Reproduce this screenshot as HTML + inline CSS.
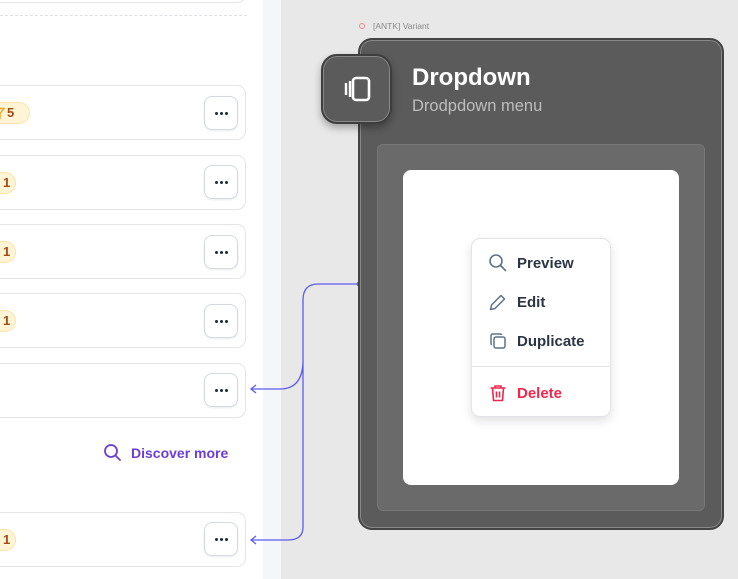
<!DOCTYPE html>
<html><head><style>
*{box-sizing:border-box;margin:0;padding:0}
body{width:738px;height:579px;overflow:hidden;background:#e8e8e8;font-family:"Liberation Sans",sans-serif;position:relative}
.left{position:absolute;left:0;top:0;width:263px;height:579px;background:#fff}
.strip{position:absolute;left:263px;top:0;width:18px;height:579px;background:#f5f6f8}
.card{position:absolute;left:-20px;width:266px;height:55px;border:1px solid #e3e5e9;border-radius:9px;background:#fff}
.btn{position:absolute;left:204px;width:34px;height:34px;border:1px solid #d5dae1;border-radius:8px;background:#fff;box-shadow:0 1px 2px rgba(0,0,0,.08)}
.btn::after{content:"";position:absolute;left:10px;top:15px;width:3px;height:3px;border-radius:50%;background:#1f2937;box-shadow:5px 0 #1f2937,10px 0 #1f2937}
.badge{position:absolute;height:22px;border-radius:11px;background:#fff4d6;border:1px solid #fde4a6;color:#a24c12;font-weight:bold;font-size:13px;line-height:20px}
.frame{position:absolute;left:358px;top:38px;width:366px;height:492px;background:#5b5b5b;border:2px solid #444;border-radius:14px;box-shadow:inset 0 0 0 1px #888}
.icon{position:absolute;left:321px;top:54px;width:71px;height:70px;background:#5b5b5b;border:2px solid #3e3e3e;border-radius:16px;box-shadow:0 4px 8px rgba(0,0,0,.3),inset 0 0 0 1px #888}
.menu{position:absolute;left:471px;top:238px;width:140px;height:179px;background:#fff;border:1px solid #e2e4e8;border-radius:9px;box-shadow:0 4px 10px rgba(0,0,0,.12)}
.mi{position:absolute;left:45px;font-size:15px;font-weight:bold;color:#2b3544}
</style></head><body>
<div class="left"></div>
<div class="strip"></div>
<div class="card" style="top:-52px"></div>
<div style="position:absolute;left:0;top:15px;width:247px;border-top:1px dashed #dcdfe4"></div>

<div class="card" style="top:85px"></div>
<div class="card" style="top:155px"></div>
<div class="card" style="top:224px"></div>
<div class="card" style="top:293px"></div>
<div class="card" style="top:363px"></div>
<div class="card" style="top:512px"></div>

<div class="badge" style="left:-10px;top:102px;width:40px;padding-left:14px"><svg width="12" height="12" viewBox="0 0 12 12" style="position:absolute;left:2px;top:4px"><path d="M1 1.5h10L7 6.5V11L5 10V6.5Z" fill="none" stroke="#f5a524" stroke-width="1.4"/></svg><span style="position:absolute;left:16px">5</span></div>
<div class="badge" style="left:-10px;top:172px;width:26px;padding-left:12px">1</div>
<div class="badge" style="left:-10px;top:241px;width:26px;padding-left:12px">1</div>
<div class="badge" style="left:-10px;top:310px;width:26px;padding-left:12px">1</div>
<div class="badge" style="left:-10px;top:529px;width:26px;padding-left:12px">1</div>

<div class="btn" style="top:96px"></div>
<div class="btn" style="top:165px"></div>
<div class="btn" style="top:235px"></div>
<div class="btn" style="top:304px"></div>
<div class="btn" style="top:373px"></div>
<div class="btn" style="top:522px"></div>

<svg style="position:absolute;left:103px;top:443px" width="20" height="20" viewBox="0 0 20 20"><circle cx="8" cy="8" r="6" fill="none" stroke="#6a3fd8" stroke-width="1.8"/><path d="M12.5 12.5L17 17" stroke="#6a3fd8" stroke-width="1.8" stroke-linecap="round"/></svg>
<div style="position:absolute;left:131px;top:445px;font-size:14px;font-weight:bold;color:#6a3fd8">Discover more</div>

<svg style="position:absolute;left:0;top:0" width="738" height="579">
<path d="M359 284H318Q303 284 303 300V527Q303 540 288 540H251M303 360Q303 389 280 389H251" fill="none" stroke="#5b5cf0" stroke-width="1.3"/>
<path d="M256 385L251 389L256 393M256 536L251 540L256 544" fill="none" stroke="#5b5cf0" stroke-width="1.3"/>
<circle cx="359" cy="284" r="2.5" fill="#5b5cf0"/>
</svg>

<div style="position:absolute;left:359px;top:23px;width:6px;height:6px;border:1.3px solid #e88;border-radius:50%"></div>
<div style="position:absolute;left:373px;top:21px;font-size:8.5px;color:#888">[ANTK] Variant</div>

<div class="frame"></div>
<div style="position:absolute;left:377px;top:144px;width:328px;height:367px;background:#6b6a6b;border:1px solid #777;border-radius:6px"></div>
<div style="position:absolute;left:403px;top:170px;width:276px;height:315px;background:#fff;border-radius:8px"></div>
<div class="icon"><svg width="71" height="70" viewBox="0 0 71 70" style="position:absolute;left:-2px;top:-2px"><rect x="32" y="24" width="16" height="22" rx="3" fill="none" stroke="#fff" stroke-width="2.6"/><path d="M25 29v12M29 27v16" stroke="#fff" stroke-width="2.4"/></svg></div>
<div style="position:absolute;left:412px;top:64px;font-size:24px;font-weight:bold;color:#fff">Dropdown</div>
<div style="position:absolute;left:412px;top:97px;font-size:16.5px;color:#bdbdbd">Drodpdown menu</div>

<div class="menu">
<svg style="position:absolute;left:16px;top:14px" width="20" height="20" viewBox="0 0 20 20"><circle cx="8" cy="8" r="6" fill="none" stroke="#5f7384" stroke-width="1.6"/><path d="M12.5 12.5L17.5 17.5" stroke="#5f7384" stroke-width="1.6" stroke-linecap="round"/></svg>
<div class="mi" style="top:16px">Preview</div>
<svg style="position:absolute;left:16px;top:53px" width="20" height="20" viewBox="0 0 20 20"><path d="M13 3.5l3.5 3.5L7 16.5 2.5 17.5 3.5 13Z" fill="none" stroke="#5f7384" stroke-width="1.5" stroke-linejoin="round"/></svg>
<div class="mi" style="top:55px">Edit</div>
<svg style="position:absolute;left:16px;top:92px" width="20" height="20" viewBox="0 0 20 20"><rect x="6" y="6" width="11" height="11" rx="2" fill="none" stroke="#5f7384" stroke-width="1.5"/><path d="M4 13.5Q3 13.5 3 12V5Q3 3 5 3h7q1.5 0 1.5 1" fill="none" stroke="#5f7384" stroke-width="1.5"/></svg>
<div class="mi" style="top:94px">Duplicate</div>
<div style="position:absolute;left:0;top:127px;width:100%;border-top:1px solid #e3e5e8"></div>
<svg style="position:absolute;left:16px;top:144px" width="20" height="20" viewBox="0 0 20 20"><path d="M2.5 5h15M7 5V3h6v2M4.5 5l1 12.5h9l1-12.5M8.5 8.5v6M11.5 8.5v6" fill="none" stroke="#f0274a" stroke-width="1.6" stroke-linejoin="round"/></svg>
<div class="mi" style="top:146px;color:#f0274a">Delete</div>
</div>
</body></html>
